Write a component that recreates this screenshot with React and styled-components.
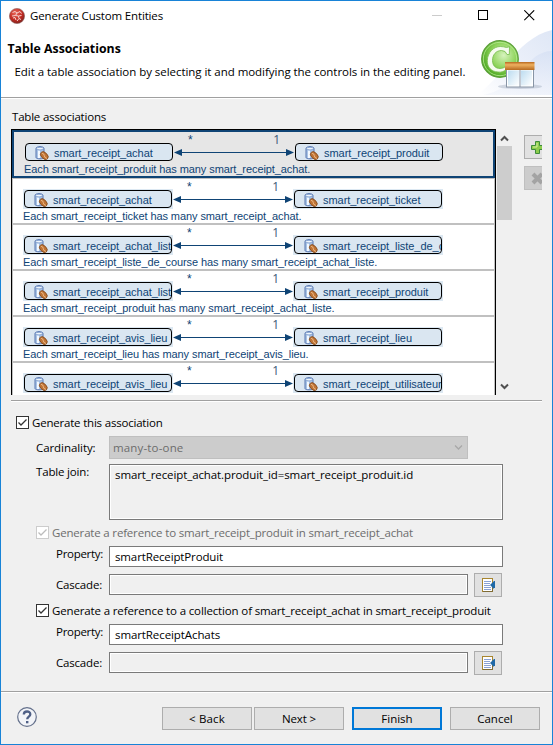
import React from 'react';
import styled, { createGlobalStyle } from 'styled-components';

const ui = '"Open Sans", "Noto Sans", sans-serif';
const diagram = '"Liberation Sans", Arial, sans-serif';
const navy = '#0f4475';

const GlobalStyle = createGlobalStyle`
  * { box-sizing: border-box; }
  body { margin: 0; background: #f0f0f0; }
  button, input { font: inherit; }
  svg { display: block; flex: none; }
`;

const Window = styled.main`
  width: 553px;
  height: 745px;
  border: 1px solid #1883d7;
  background: #f0f0f0;
  font: 11.5px/15px ${ui};
  color: #000;
  overflow: hidden;
  display: flex;
  flex-direction: column;
`;

const Text = styled.span`
  white-space: pre;
  letter-spacing: ${(p) => p.$track || 0}px;
`;

const Top = styled.header`
  height: 98px;
  flex: none;
  background: #fff;
  border-bottom: 1px solid #fff;
  box-shadow: inset 0 -1px #a0a0a0;
  display: flex;
  flex-direction: column;
`;

const TitleBar = styled.div`
  height: 30px;
  flex: none;
  padding: 0 0 1px 8px;
  display: flex;
  gap: 5px;
  align-items: center;
`;

const Caption = styled.div`
  display: flex;
  margin-left: auto;
  padding-right: 17px;
  gap: 35px;
`;

const Banner = styled.div`
  flex: 1;
  display: flex;
  justify-content: space-between;
`;

const BannerText = styled.div`
  padding: 10px 0 0 6.5px;
`;

const Heading = styled.h1`
  margin: 0;
  font-size: 12.3px;
  line-height: 16px;
  font-weight: 700;
`;

const Subtitle = styled.p`
  margin: 7px 0 0 7px;
`;

const BannerArt = styled.svg`
  margin-top: -7px;
`;

const Body = styled.section`
  padding: 10px 10px 0 10px;
  display: flex;
  flex-direction: column;
`;

const ListLabel = styled.div`
  padding-left: 1px;
  margin-bottom: 5px;
  height: 15px;
`;

const ListArea = styled.div`
  display: flex;
  height: 266px;
  overflow: hidden;
`;

const List = styled.div`
  width: 485px;
  flex: none;
  border: 1px solid #000;
  border-bottom: 0;
  background: #fff;
  overflow: hidden;
`;

const Item = styled.div`
  height: ${(p) => (p.$selected ? 48 : 46)}px;
  border: ${(p) => (p.$selected ? `2px solid ${navy}` : '1px solid #c0c0c0')};
  background: ${(p) => (p.$selected ? '#e6e6e6' : '#fff')};
  padding-left: 10px;
  color: ${navy};
  font: 11px/13px ${diagram};
`;

const Pair = styled.div`
  display: flex;
  align-items: flex-end;
  height: 30px;
`;

const NodeHalo = styled.div`
  width: 150px;
  height: 20px;
  flex: none;
  padding: 1px;
  background: ${(p) => (p.$selected ? 'transparent' : '#dce8f2')};
`;

const NodeBox = styled.div`
  height: 18px;
  border: 1px solid #000;
  border-radius: 4px;
  background: #dae6f1;
  display: flex;
  padding: 2px 0 0 9px;
  gap: 5px;
  overflow: hidden;
`;

const NodeLabel = styled.span`
  white-space: pre;
  padding-top: 1px;
  letter-spacing: -0.05px;
`;

const Link = styled.div`
  width: 120px;
  height: 30px;
  flex: none;
  display: flex;
  flex-direction: column;
`;

const Multiplicity = styled.div`
  height: 11px;
  display: flex;
  justify-content: space-between;
  padding: 1px 14px 0 14px;
  font-size: 12px;
  line-height: 14px;
`;

const One = styled.span`
  font-family: ${ui};
  color: #3c5a78;
`;

const Sentence = styled.div`
  white-space: pre;
  margin-top: 1px;
  letter-spacing: -0.085px;
`;

const ScrollBar = styled.div`
  width: 17px;
  flex: none;
  display: flex;
  flex-direction: column;
  align-items: center;
  justify-content: space-between;
  padding: 6px 0 5px 0;
`;

const Thumb = styled.div`
  height: 74px;
  width: 15px;
  background: #cdcdcd;
  margin: 4px 0 auto;
`;

const SideButtons = styled.div`
  flex: 1;
  overflow: hidden;
  margin-left: 11px;
  padding-top: 6px;
  display: flex;
  flex-direction: column;
  gap: 7px;
`;

const SideButton = styled.button`
  width: 26px;
  height: 24px;
  flex: none;
  padding: 0 0 0 6px;
  border: 1px solid ${(p) => (p.disabled ? '#bfbfbf' : '#adadad')};
  background: ${(p) => (p.disabled ? '#cccccc' : '#e1e1e1')};
`;

const Separator = styled.div`
  height: 2px;
  flex: none;
  background: #fff;
  border-top: 1px solid #a0a0a0;
  margin-top: ${(p) => p.$gap}px;
`;

const Form = styled.form`
  padding: 13px 0 0 5px;
  display: flex;
  flex-direction: column;
`;

const CheckRow = styled.label`
  display: flex;
  align-items: center;
  height: 15px;
  gap: 3px;
  margin-top: ${(p) => p.$gap || 0}px;
  padding-left: ${(p) => (p.$nested ? 20 : 0)}px;
  color: ${(p) => (p.$disabled ? '#6d6d6d' : '#000')};
`;

const Box = styled.span`
  width: 13px;
  height: 13px;
  border: 1px solid ${(p) => (p.$disabled ? '#cccccc' : '#333')};
  background: #fff;
  color: ${(p) => (p.$disabled ? '#bcbcbc' : '#333')};
`;

const FieldRow = styled.div`
  display: grid;
  grid-template-columns: 93px auto auto 1fr;
  align-items: start;
  margin-top: ${(p) => p.$gap}px;
`;

const FieldLabel = styled.span`
  padding: ${(p) => p.$drop || 0}px 0 0 ${(p) => p.$indent}px;
  height: 15px;
`;

const Combo = styled.div`
  width: 359px;
  height: 23px;
  border: 1px solid #bfbfbf;
  background: #ccc;
  color: #6d6d6d;
  display: flex;
  align-items: center;
  justify-content: space-between;
  padding: 0 4px 0 3px;
`;

const Field = styled.div`
  width: ${(p) => (p.$short ? 359 : 394)}px;
  height: ${(p) => (p.$tall ? 56 : 21)}px;
  margin-top: ${(p) => (p.$short ? 1 : 0)}px;
  border: 1px solid #7a7a7a;
  box-shadow: inset 0 0 0 1px #fff;
  background: ${(p) => (p.$editable ? '#fff' : '#f0f0f0')};
  padding: 2px 5px;
`;

const PickButton = styled.button`
  width: 28px;
  height: 24px;
  margin-left: 6px;
  padding: 0 0 0 7px;
  border: 1px solid #adadad;
  background: #e1e1e1;
`;

const Footer = styled.footer`
  display: flex;
  padding: 14px 12px 0 15px;
`;

const Push = styled.button`
  width: 90px;
  height: 23px;
  padding: 0;
  margin-left: ${(p) => p.$gap}px;
  border: ${(p) => (p.$primary ? '2px solid #0078d7' : '1px solid #adadad')};
  background: #e1e1e1;
  color: #000;
`;

const HelpWrap = styled.div`
  width: 22px;
  height: 22px;
  margin: -1px auto 0 0;
`;

function AppIcon() {
  return (
    <svg width="16" height="16" viewBox="0 0 16 16">
      <defs>
        <radialGradient id="redBall" cx=".4" cy=".3" r=".75">
          <stop offset="0" stopColor="#e8685a" />
          <stop offset=".6" stopColor="#c02a22" />
          <stop offset="1" stopColor="#77231f" />
        </radialGradient>
      </defs>
      <circle cx="8" cy="8" r="7.6" fill="url(#redBall)" stroke="#8d5f5c" strokeWidth=".6" />
      <path d="M3.500 4.500L6 3.500L8 5L11 3.500L12.500 5.500M8 5L6.500 7.500L3 8M6.500 7.500L9.500 8L12.500 7.500M4 10L6 9.500L7 12M9.500 8L10 10.500L12 11.500M10 10.500L8 13" fill="none" stroke="#f6d3cf" strokeWidth="1" />
    </svg>
  );
}

function HeaderArt() {
  return (
    <BannerArt width="74" height="72" viewBox="0 0 74 72">
      <defs>
        <linearGradient id="swoosh" x1="0" y1="1" x2="1" y2="0">
          <stop offset="0" stopColor="#fff" />
          <stop offset=".45" stopColor="#edf1fa" />
          <stop offset="1" stopColor="#dfe7f6" />
        </linearGradient>
        <linearGradient id="swooshFront" x1="0" y1="0" x2="0" y2="1">
          <stop offset="0" stopColor="#d3def3" />
          <stop offset="1" stopColor="#f1f4fb" />
        </linearGradient>
        <radialGradient id="ball" cx=".6" cy=".4" r=".62">
          <stop offset="0" stopColor="#d6f3bd" />
          <stop offset=".55" stopColor="#8fd45c" />
          <stop offset="1" stopColor="#49a51e" />
        </radialGradient>
        <linearGradient id="bar" x1="0" y1="0" x2="0" y2="1">
          <stop offset="0" stopColor="#b8691f" />
          <stop offset=".35" stopColor="#eeb060" />
          <stop offset="1" stopColor="#b76a20" />
        </linearGradient>
        <linearGradient id="pane" x1="0" y1="0" x2="1" y2="1">
          <stop offset="0" stopColor="#bcdcf0" />
          <stop offset="1" stopColor="#fff" />
        </linearGradient>
      </defs>
      <path d="M74 6C52 11 36 30 24 46C15 58 6 65 0 71H74Z" fill="url(#swoosh)" />
      <path d="M74 27C62 27 52 35 45 47C36 59 20 68 5 71H74Z" fill="url(#swooshFront)" opacity=".65" />
      <ellipse cx="42" cy="62.500" rx="22" ry="2.500" fill="#aab3c4" opacity=".5" />
      <circle cx="22" cy="35" r="18.300" fill="url(#ball)" stroke="#5d9f3b" strokeWidth="1.200" />
      <circle cx="22" cy="35" r="16.700" fill="none" stroke="#b9eb94" strokeWidth=".8" />
      <path d="M28.500 23.500Q31 23 31.500 22.700L31.300 30.500H29Q27.800 26.500 23.500 26.500C17.800 26.500 14.500 31 14.500 36.500C14.500 41.500 17.500 44.500 22 44.500Q25 44.500 28 42.500L29 45C26.500 47.500 23 48.500 20 48C13 47.500 9 43 9.300 36.500C9.600 28.500 15.500 22.500 22.500 22.500C25 22.500 26.500 23 28.500 23.500Z" fill="#f5fbef" stroke="#75bb4b" strokeWidth=".8" />
      <rect x="28.500" y="45" width="27" height="18" fill="#fff" stroke="#8794a5" />
      <rect x="30" y="46.500" width="11" height="15" fill="url(#pane)" />
      <rect x="43" y="46.500" width="11" height="15" fill="url(#pane)" />
      <rect x="41.500" y="46" width="1" height="17" fill="#8794a5" />
      <rect x="27" y="38" width="29.500" height="8" fill="url(#bar)" />
    </BannerArt>
  );
}

function EntityIcon() {
  return (
    <svg width="14" height="14" viewBox="0 0 14 14">
      <path d="M1 2.500C1 0 9 0 9 2.500V11.500C9 13.300 1 13.300 1 11.500Z" fill="#a9c4e6" stroke="#5674ae" />
      <path d="M3 4.500H5V12H3Z" fill="#f4f9ff" />
      <ellipse cx="5" cy="2.600" rx="3.300" ry="1.300" fill="#eff6fd" stroke="#6f8fc4" strokeWidth=".7" />
      <ellipse cx="9.300" cy="9.600" rx="4.500" ry="3" transform="rotate(45 9.300 9.600)" fill="#bf7436" stroke="#804719" strokeWidth=".8" />
      <path d="M6.700 7Q9.500 7.800 9.300 9.700T12 12.500" fill="none" stroke="#f0c08c" strokeWidth=".9" />
    </svg>
  );
}

function Arrow() {
  return (
    <svg width="120" height="19" viewBox="0 0 120 19">
      <path d="M7 9.500H113" stroke={navy} strokeWidth="1" />
      <path d="M0 9.500L8 6V13Z M120 9.500L112 6V13Z" fill={navy} />
    </svg>
  );
}

function Chevron({ up, color = '#505050', thick = 2 }) {
  return (
    <svg width="9" height="7" viewBox="0 0 9 7">
      <path d={up ? 'M1 5.500L4.500 2L8 5.500' : 'M1 1.500L4.500 5L8 1.500'} fill="none" stroke={color} strokeWidth={thick} />
    </svg>
  );
}

function PickIcon() {
  return (
    <svg width="14" height="16" viewBox="0 0 14 16">
      <rect x=".5" y="1.500" width="10" height="13" fill="#fff" stroke="#a8862f" />
      <path d="M10.500 6V14.500H1" fill="none" stroke="#7e6b35" />
      <path d="M2 4.500H9M2 6.500H8M2 8.500H8M2 10.500H9M2 12.500H9" stroke="#8ba2d3" />
      <path d="M8 8L12 4V12Z" fill="#1f69a8" />
      <path d="M12.500 4V11" stroke="#1f69a8" />
    </svg>
  );
}

function HelpIcon() {
  return (
    <svg width="22" height="22" viewBox="0 0 22 22">
      <circle cx="11" cy="11" r="9.300" fill="#f2f4f8" stroke="#65718c" strokeWidth="1.200" />
      <path d="M7.800 8.600C7.800 4.500 14.300 4.500 14.300 8.300C14.300 10.700 11.200 10.700 11.200 13.300" fill="none" stroke="#4f6087" strokeWidth="2.300" />
      <rect x="10" y="15" width="2.400" height="2.300" fill="#4f6087" />
    </svg>
  );
}

function Check({ label, track, nested, disabled, gap }) {
  return (
    <CheckRow $nested={nested} $disabled={disabled} $gap={gap}>
      <Box $disabled={disabled}>
        <svg width="11" height="11" viewBox="0 0 11 11">
          <path d="M1.500 5.500L4 8L9.500 2.500" fill="none" stroke="currentColor" strokeWidth="1.300" />
        </svg>
      </Box>
      <Text $track={track}>{label}</Text>
    </CheckRow>
  );
}

function EntityNode({ name, selected }) {
  return (
    <NodeHalo $selected={selected}>
      <NodeBox>
        <EntityIcon />
        <NodeLabel>{name}</NodeLabel>
      </NodeBox>
    </NodeHalo>
  );
}

function Association({ from, to, selected }) {
  return (
    <Item $selected={selected}>
      <Pair>
        <EntityNode name={from} selected={selected} />
        <Link>
          <Multiplicity>
            <span>*</span>
            <One>1</One>
          </Multiplicity>
          <Arrow />
        </Link>
        <EntityNode name={to} selected={selected} />
      </Pair>
      <Sentence>{`Each ${to} has many ${from}.`}</Sentence>
    </Item>
  );
}

function PropertyFields({ value, track }) {
  return (
    <>
      <FieldRow $gap={6}>
        <FieldLabel $indent={40}><Text $track={-0.29}>Property:</Text></FieldLabel>
        <Field $editable><Text $track={track}>{value}</Text></Field>
      </FieldRow>
      <FieldRow $gap={6}>
        <FieldLabel $indent={40} $drop={4}><Text $track={-0.19}>Cascade:</Text></FieldLabel>
        <Field $short />
        <PickButton type="button"><PickIcon /></PickButton>
      </FieldRow>
    </>
  );
}

const associations = [
  { from: 'smart_receipt_achat', to: 'smart_receipt_produit' },
  { from: 'smart_receipt_achat', to: 'smart_receipt_ticket' },
  { from: 'smart_receipt_achat_liste', to: 'smart_receipt_liste_de_course' },
  { from: 'smart_receipt_achat_liste', to: 'smart_receipt_produit' },
  { from: 'smart_receipt_avis_lieu', to: 'smart_receipt_lieu' },
  { from: 'smart_receipt_avis_lieu', to: 'smart_receipt_utilisateur' },
];

export default function App() {
  return (
    <Window>
      <GlobalStyle />
      <Top>
        <TitleBar>
          <AppIcon />
          <Text $track={-0.158}>Generate Custom Entities</Text>
          <Caption>
            <svg width="11" height="11" viewBox="0 0 11 11"><path d="M0 5.500H10" stroke="#ccc" /></svg>
            <svg width="11" height="11" viewBox="0 0 11 11"><rect x=".5" y=".5" width="9" height="9" fill="none" stroke="#000" /></svg>
            <svg width="11" height="11" viewBox="0 0 11 11"><path d="M.3 .3L10.200 10.200M10.200 .3L.3 10.200" stroke="#000" strokeWidth="1.100" /></svg>
          </Caption>
        </TitleBar>
        <Banner>
          <BannerText>
            <Heading>Table Associations</Heading>
            <Subtitle>
              <Text $track={-0.042}>Edit a table association by selecting it and modifying the controls in the editing panel.</Text>
            </Subtitle>
          </BannerText>
          <HeaderArt />
        </Banner>
      </Top>

      <Body>
        <ListLabel><Text $track={-0.2}>Table associations</Text></ListLabel>
        <ListArea>
          <List>
            {associations.map((a, i) => (
              <Association key={i} {...a} selected={i === 0} />
            ))}
          </List>
          <ScrollBar>
            <Chevron up />
            <Thumb />
            <Chevron />
          </ScrollBar>
          <SideButtons>
            <SideButton>
              <svg width="13" height="13" viewBox="0 0 13 13">
                <path d="M4.500 .5H8.500V4.500H12.500V8.500H8.500V12.500H4.500V8.500H.5V4.500H4.500Z" fill="#8ccc4c" stroke="#3e8c3a" />
                <path d="M6 2V6H2" fill="none" stroke="#d6f29b" />
              </svg>
            </SideButton>
            <SideButton disabled>
              <svg width="13" height="13" viewBox="0 0 13 13">
                <path d="M2 2L11 11M11 2L2 11" stroke="#a3a3a3" strokeWidth="4" />
              </svg>
            </SideButton>
          </SideButtons>
        </ListArea>
        <Separator $gap={5} />

        <Form>
          <Check label="Generate this association" track={-0.2} />
          <FieldRow $gap={6}>
            <FieldLabel $indent={20} $drop={4}><Text $track={-0.07}>Cardinality:</Text></FieldLabel>
            <Combo>
              <Text $track={0.16}>many-to-one</Text>
              <Chevron color="#a8a8a8" thick={1.3} />
            </Combo>
          </FieldRow>
          <FieldRow $gap={5}>
            <FieldLabel $indent={20}><Text $track={-0.17}>Table join:</Text></FieldLabel>
            <Field $tall><Text $track={-0.1}>smart_receipt_achat.produit_id=smart_receipt_produit.id</Text></Field>
          </FieldRow>
          <Check nested disabled gap={5} track={-0.18} label="Generate a reference to smart_receipt_produit in smart_receipt_achat" />
          <PropertyFields value="smartReceiptProduit" track={-0.13} />
          <Check nested gap={6} track={-0.14} label="Generate a reference to a collection of smart_receipt_achat in smart_receipt_produit" />
          <PropertyFields value="smartReceiptAchats" track={-0.09} />
        </Form>
      </Body>

      <Separator $gap={16} />
      <Footer>
        <HelpWrap><HelpIcon /></HelpWrap>
        <Push $gap={0}><Text $track={0.17}>{'< Back'}</Text></Push>
        <Push $gap={2}><Text $track={-0.1}>{'Next >'}</Text></Push>
        <Push $gap={8} $primary><Text>Finish</Text></Push>
        <Push $gap={8}><Text>Cancel</Text></Push>
      </Footer>
    </Window>
  );
}
